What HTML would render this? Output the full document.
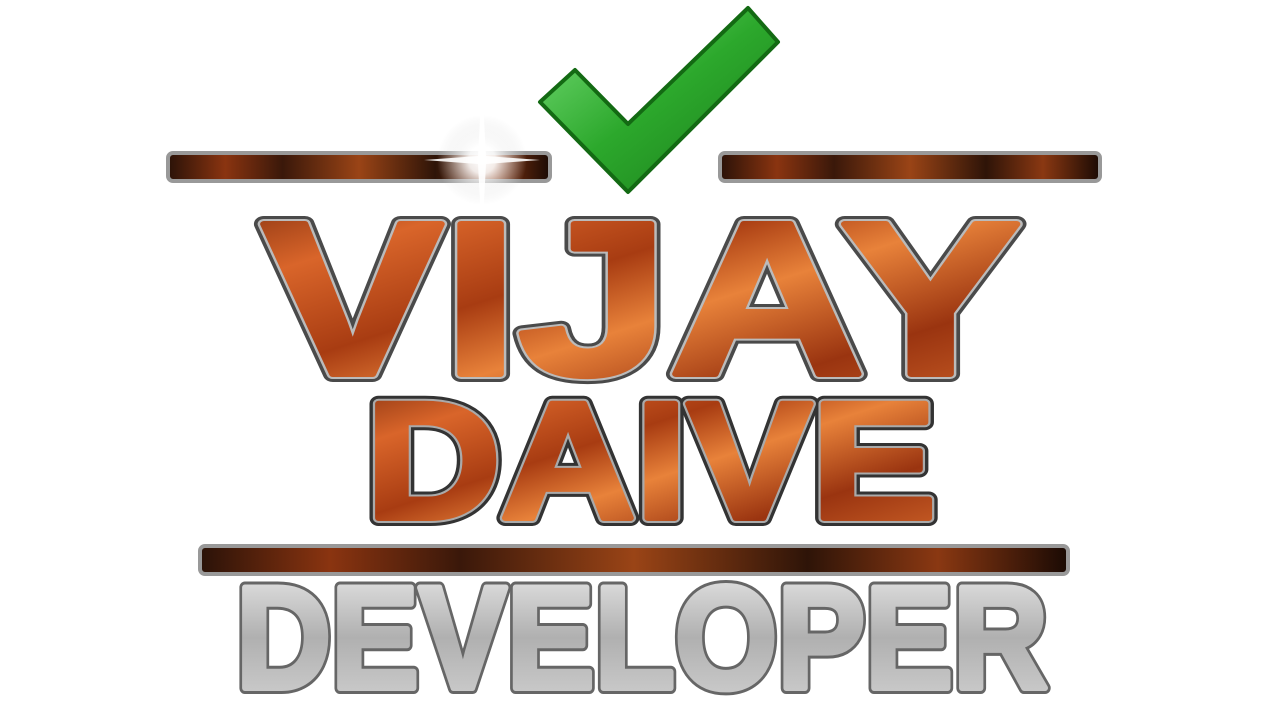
<!DOCTYPE html>
<html><head><meta charset="utf-8"><style>
html,body{margin:0;padding:0;background:#fff;width:1280px;height:720px;overflow:hidden}
</style></head><body>
<svg width="1280" height="720" viewBox="0 0 1280 720" xmlns="http://www.w3.org/2000/svg">
<defs>
<linearGradient id="fire" x1="0" y1="0" x2="1" y2="1">
<stop offset="0" stop-color="#7a2a0c"/><stop offset="0.2" stop-color="#d9652a"/>
<stop offset="0.4" stop-color="#a83c12"/><stop offset="0.55" stop-color="#e8823a"/>
<stop offset="0.75" stop-color="#9a3410"/><stop offset="1" stop-color="#d66a2c"/>
</linearGradient>
<linearGradient id="firebar" x1="0" y1="0" x2="1" y2="0">
<stop offset="0" stop-color="#2a1208"/><stop offset="0.15" stop-color="#8a3410"/>
<stop offset="0.3" stop-color="#3a180a"/><stop offset="0.5" stop-color="#9a4416"/>
<stop offset="0.7" stop-color="#2e1408"/><stop offset="0.85" stop-color="#8a3812"/>
<stop offset="1" stop-color="#1a0a04"/>
</linearGradient>
<linearGradient id="silver" x1="0" y1="0" x2="0" y2="1">
<stop offset="0" stop-color="#eeeeee"/><stop offset="0.5" stop-color="#b0b0b0"/><stop offset="1" stop-color="#d4d4d4"/>
</linearGradient>
<linearGradient id="green" x1="0" y1="0" x2="1" y2="1">
<stop offset="0" stop-color="#7be07b"/><stop offset="0.5" stop-color="#2ca82c"/><stop offset="1" stop-color="#1a7a1a"/>
</linearGradient>
<radialGradient id="glow"><stop offset="0" stop-color="#fff"/><stop offset="0.3" stop-color="#fff" stop-opacity="0.9"/><stop offset="1" stop-color="#ddd" stop-opacity="0"/></radialGradient>
</defs>
<rect x="168" y="153" width="382" height="28" rx="5" fill="url(#firebar)" stroke="#999" stroke-width="4"/>
<rect x="720" y="153" width="380" height="28" rx="5" fill="url(#firebar)" stroke="#999" stroke-width="4"/>
<rect x="200" y="546" width="868" height="28" rx="5" fill="url(#firebar)" stroke="#999" stroke-width="4"/>
<circle cx="482" cy="160" r="45" fill="url(#glow)"/>
<path d="M482 80 L486 156 L540 160 L486 164 L482 240 L478 164 L424 160 L478 156Z" fill="#fff" opacity="0.9"/>
<path d="M540,102 L575,70 L628,124 L748,8 L778,42 L628,192 Z" fill="url(#green)" stroke="#136a13" stroke-width="4" stroke-linejoin="round"/>
<g font-family="Liberation Sans, sans-serif" font-weight="bold" stroke-linejoin="round">
<text x="262" y="374" font-size="218" textLength="759" lengthAdjust="spacingAndGlyphs" fill="url(#fire)" stroke="#4a4a4a" stroke-width="16">VIJAY</text>
<text x="262" y="374" font-size="218" textLength="759" lengthAdjust="spacingAndGlyphs" fill="url(#fire)" stroke="#bbb" stroke-width="10">VIJAY</text>
<text x="262" y="374" font-size="218" textLength="759" lengthAdjust="spacingAndGlyphs" fill="url(#fire)" stroke="url(#fire)" stroke-width="6">VIJAY</text>
<text x="366" y="518" font-size="166" textLength="570" lengthAdjust="spacingAndGlyphs" fill="url(#fire)" stroke="#333" stroke-width="16">DAIVE</text>
<text x="366" y="518" font-size="166" textLength="570" lengthAdjust="spacingAndGlyphs" fill="url(#fire)" stroke="#aaa" stroke-width="10">DAIVE</text>
<text x="366" y="518" font-size="166" textLength="570" lengthAdjust="spacingAndGlyphs" fill="url(#fire)" stroke="url(#fire)" stroke-width="6">DAIVE</text>
<text x="236" y="688" font-size="146" textLength="812" lengthAdjust="spacingAndGlyphs" fill="#777" stroke="#666" stroke-width="12">DEVELOPER</text>
<text x="236" y="688" font-size="146" textLength="812" lengthAdjust="spacingAndGlyphs" fill="url(#silver)" stroke="url(#silver)" stroke-width="6">DEVELOPER</text>
</g>
</svg>
</body></html>
